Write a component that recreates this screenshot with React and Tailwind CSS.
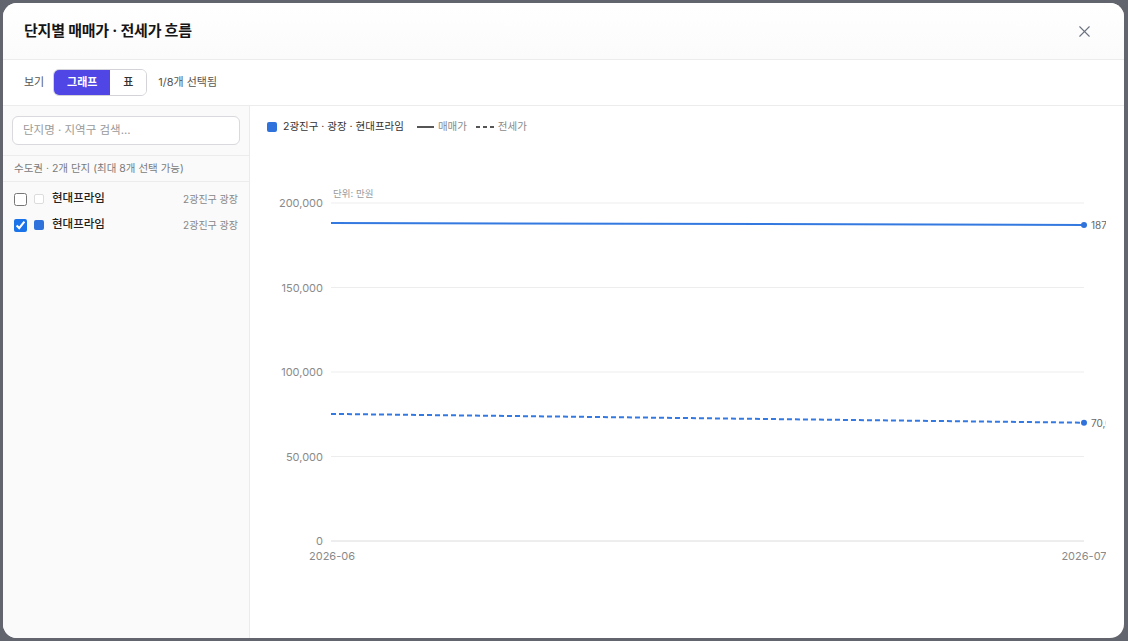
import { X } from 'lucide-react';

const font = { fontFamily: 'Inter, "Noto Sans CJK KR", "Noto Sans", sans-serif' };

// chart geometry (svg-local coordinates)
const PL = 65, PR = 818, PT = 52, PB = 390;
const yOf = (v) => PB - (v / 200000) * (PB - PT);
const ticks = [200000, 150000, 100000, 50000, 0];

function Chart(){
  const sale = [188200, 187000];
  const jeonse = [75200, 70000];
  return (
    <svg width="840" height="440" className="block overflow-hidden" style={font}>
      {ticks.map(t => (
        <g key={t}>
          <line x1={PL} x2={PR} y1={yOf(t)} y2={yOf(t)} stroke={t === 0 ? '#dcdcdc' : '#ededed'} strokeWidth="1" />
          <text x="57" y={yOf(t) + 4} textAnchor="end" fontSize="11" fill="#8a8a8a">{t.toLocaleString('en-US')}</text>
        </g>
      ))}
      <text x={PL + 2} y="46" fontSize="9.5" fill="#9a9a9a">단위: 만원</text>
      <line x1={PL} x2={PR} y1={yOf(sale[0])} y2={yOf(sale[1])} stroke="#3479e0" strokeWidth="2" />
      <circle cx={PR} cy={yOf(sale[1])} r="3" fill="#2f72db" />
      <text x={PR + 7} y={yOf(sale[1]) + 4} fontSize="10" fill="#666">187,000</text>
      <line x1={PL} x2={PR} y1={yOf(jeonse[0])} y2={yOf(jeonse[1])} stroke="#3479e0" strokeWidth="2" strokeDasharray="5 3" />
      <circle cx={PR} cy={yOf(jeonse[1])} r="3" fill="#2f72db" />
      <text x={PR + 7} y={yOf(jeonse[1]) + 4} fontSize="10" fill="#666">70,000</text>
      <text x={PL + 1} y="409" textAnchor="middle" fontSize="11" fill="#8a8a8a">2026-06</text>
      <text x={PR} y="409" textAnchor="middle" fontSize="11" fill="#8a8a8a">2026-07</text>
    </svg>
  );
}

export default function App(){
  const items = [
    { id:1, name:'현대프라임', area:'2광진구 광장', checked:false },
    { id:2, name:'현대프라임', area:'2광진구 광장', checked:true },
  ];
  return (
    <div className="w-[1128px] h-[641px] bg-[#62656d] pl-[3px] pt-[3px] overflow-hidden" style={font}>
      <div className="w-[1121px] h-[635px] bg-white rounded-[14px] overflow-hidden flex flex-col">
        {/* header */}
        <div className="h-[57px] shrink-0 border-b border-[#ececec] bg-gradient-to-b from-white to-[#fbfbfc] flex items-center justify-between pl-[21px] pr-[30px]">
          <div className="text-[15px] font-bold text-[#151515] tracking-[-0.2px]">단지별 매매가 · 전세가 흐름</div>
          <X size={19} strokeWidth={1.4} className="text-[#6b7280]" />
        </div>
        {/* toolbar */}
        <div className="h-[46px] shrink-0 border-b border-[#ececec] flex items-center pl-[21px] text-[11px] text-[#555]">
          <span>보기</span>
          <div className="ml-[9px] flex h-[27px] rounded-[6px] border border-[#d4d4d8] overflow-hidden">
            <button className="w-[56px] bg-[#4f46e5] text-white font-semibold text-[11px]">그래프</button>
            <button className="w-[36px] bg-white text-[#333] font-medium text-[11px]">표</button>
          </div>
          <span className="ml-[11px]">1/8개 선택됨</span>
        </div>
        {/* body */}
        <div className="flex flex-1 min-h-0">
          <div className="w-[247px] shrink-0 bg-[#fafafa] border-r border-[#ebebeb] flex flex-col">
            <div className="px-[9px] pt-[10px] pb-[10px] border-b border-[#ececec]">
              <div className="h-[29px] rounded-[6px] border border-[#d9d9de] bg-white flex items-center px-[10px] text-[11.5px] text-[#9a9a9a]">단지명 · 지역구 검색...</div>
            </div>
            <div className="h-[26px] border-b border-[#ececec] flex items-center px-[11px] text-[10.5px] text-[#7a7a7a]">수도권 · 2개 단지 (최대 8개 선택 가능)</div>
            <div className="pt-[4px]">
              {items.map(it => (
                <div key={it.id} className="h-[26px] flex items-center pl-[11px] pr-[11px]">
                  <input type="checkbox" defaultChecked={it.checked} className="w-[13px] h-[13px] m-0 accent-[#1a73e8]" />
                  <span className={`ml-[7px] w-[10px] h-[10px] rounded-[2px] ${it.checked ? 'bg-[#2f72db]' : 'border border-[#dcdcdc] bg-white'}`} />
                  <span className="ml-[8px] text-[11.5px] font-medium text-[#222]">{it.name}</span>
                  <span className="ml-auto text-[10px] text-[#888]">{it.area}</span>
                </div>
              ))}
            </div>
          </div>
          <div className="flex-1 min-w-0 pl-[16px] pt-[13px]">
            <div className="flex items-center h-[16px] pl-[1px] text-[10.5px]">
              <span className="w-[10px] h-[10px] rounded-[2px] bg-[#2f72db]" />
              <span className="ml-[6px] text-[#333]">2광진구 · 광장 · 현대프라임</span>
              <span className="ml-[13px] w-[17px] h-[2px] bg-[#555]" />
              <span className="ml-[4px] text-[#8a8a8a]">매매가</span>
              <svg width="18" height="2" className="ml-[9px]">
                <line x1="0" x2="18" y1="1" y2="1" stroke="#555" strokeWidth="2" strokeDasharray="4 3" />
              </svg>
              <span className="ml-[4px] text-[#8a8a8a]">전세가</span>
            </div>
            <div className="mt-[16px]">
              <Chart />
            </div>
          </div>
        </div>
      </div>
    </div>
  );
}
